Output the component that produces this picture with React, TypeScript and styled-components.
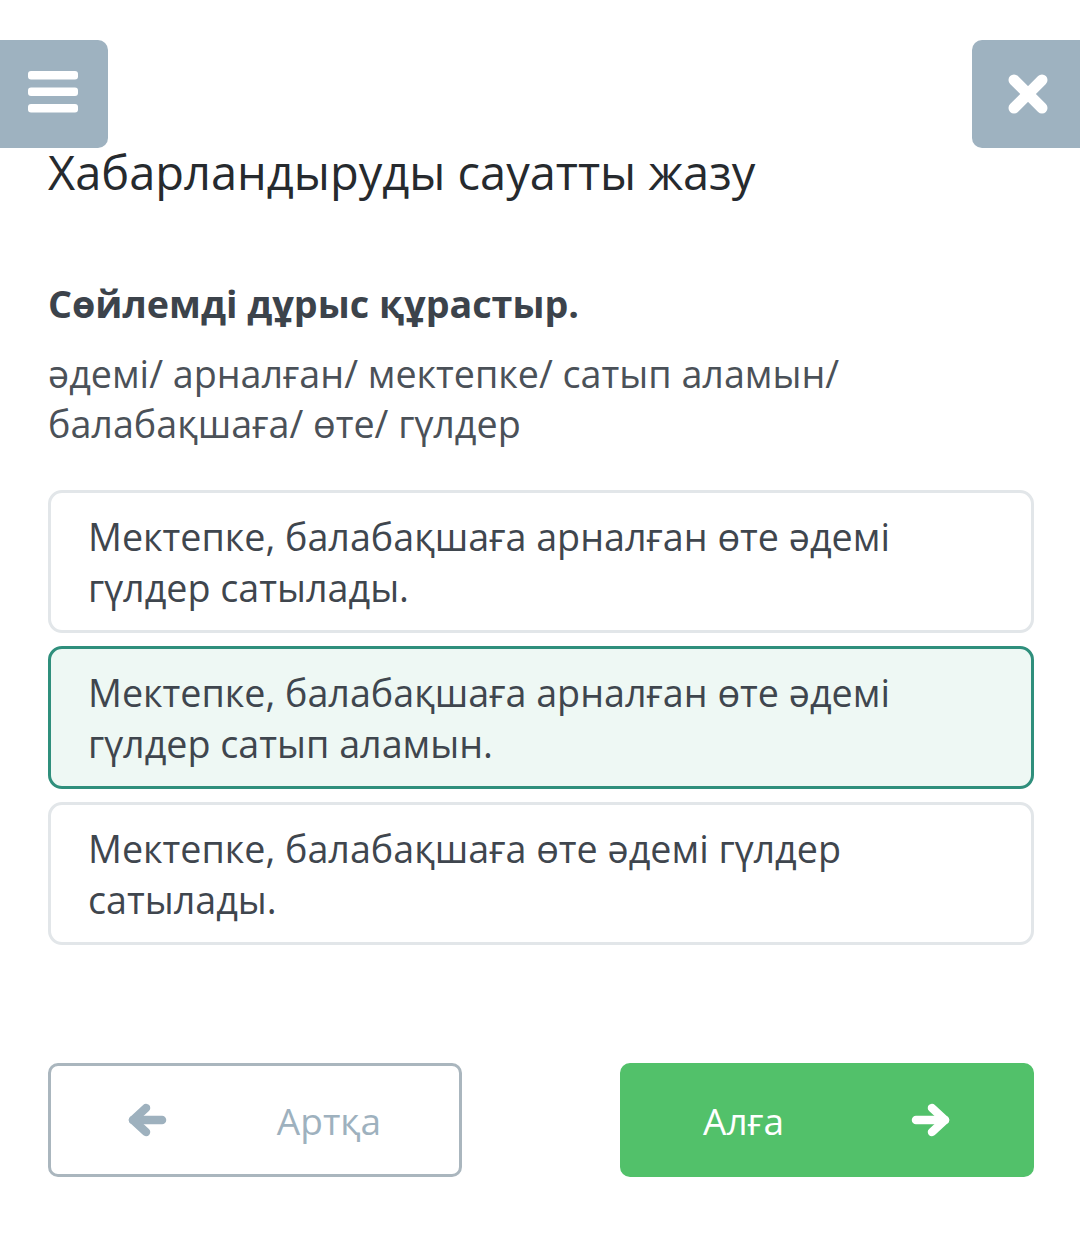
import React from "react";
import styled, { createGlobalStyle } from "styled-components";

const options = [
  { id: "a", text: "Мектепке, балабақшаға арналған өте әдемі гүлдер сатылады.", selected: false },
  { id: "b", text: "Мектепке, балабақшаға арналған өте әдемі гүлдер сатып аламын.", selected: true },
  { id: "c", text: "Мектепке, балабақшаға өте әдемі гүлдер сатылады.", selected: false },
];

const Arrow = ({ dir }: { dir: "left" | "right" }) => (
  <svg width="40" height="34" viewBox="0 0 40 34" fill="none" stroke="currentColor"
    strokeWidth="8.5" strokeLinecap="round" strokeLinejoin="round"
    style={{ transform: dir === "left" ? "scaleX(-1)" : undefined }}>
    <path d="M5 17 H34" />
    <path d="M21 5 L34 17 L21 29" />
  </svg>
);

export default function App() {
  return (
    <>
      <GlobalStyle />
      <Page>
        <TopBar>
          <IconButton $side="left" aria-label="menu">
            <svg width="50" height="42" viewBox="0 0 50 42">
              <rect x="0" y="0" width="50" height="8.5" rx="3" fill="#fff" />
              <rect x="0" y="16.5" width="50" height="8.5" rx="3" fill="#fff" />
              <rect x="0" y="33" width="50" height="8.5" rx="3" fill="#fff" />
            </svg>
          </IconButton>
          <IconButton $side="right" aria-label="close">
            <svg width="42" height="40" viewBox="0 0 42 40" fill="none" stroke="#fff"
              strokeWidth="11" strokeLinecap="round">
              <path d="M7 6 L35 34" />
              <path d="M35 6 L7 34" />
            </svg>
          </IconButton>
        </TopBar>

        <Content>
          <Title>Хабарландыруды сауатты жазу</Title>
          <Question>Сөйлемді дұрыс құрастыр.</Question>
          <Words>
            әдемі/ арналған/ мектепке/ сатып аламын/
            <br />
            балабақшаға/ өте/ гүлдер
          </Words>

          <OptionList>
            {options.map((o) => (
              <Option key={o.id} $selected={o.selected}>
                {o.text}
              </Option>
            ))}
          </OptionList>
        </Content>

        <Footer>
          <NavButton $primary={false}>
            <ArrowSlot>
              <Arrow dir="left" />
            </ArrowSlot>
            <NavLabel>Артқа</NavLabel>
          </NavButton>
          <NavButton $primary>
            <NavLabel>Алға</NavLabel>
            <ArrowSlot>
              <Arrow dir="right" />
            </ArrowSlot>
          </NavButton>
        </Footer>
      </Page>
    </>
  );
}

const GlobalStyle = createGlobalStyle`
  body {
    margin: 0;
    background: #ffffff;
    font-family: "Open Sans", "Noto Sans", sans-serif;
  }
`;

const Page = styled.div`
  width: 1080px;
  height: 1248px;
  display: flex;
  flex-direction: column;
  overflow: hidden;
`;

const TopBar = styled.div`
  display: flex;
  justify-content: space-between;
  padding-top: 40px;
  height: 108px;
`;

const IconButton = styled.button<{ $side: "left" | "right" }>`
  width: 108px;
  height: 108px;
  border: none;
  padding: 0;
  background: #9eb2c0;
  color: #ffffff;
  display: flex;
  align-items: center;
  justify-content: center;
  border-radius: ${({ $side }) => ($side === "left" ? "0 10px 10px 0" : "10px 0 0 10px")};
  cursor: pointer;
  svg {
    display: block;
    margin: ${({ $side }) => ($side === "left" ? "-4px 2px 0 0" : "0 0 0 4px")};
  }
`;

const Content = styled.div`
  padding: 0 46px 0 48px;
  display: flex;
  flex-direction: column;
`;

const Title = styled.h1`
  margin: 0;
  margin-top: -6px;
  font-size: 47px;
  font-weight: 400;
  line-height: 60px;
  color: #262a2e;
`;

const Question = styled.div`
  margin-top: 77px;
  font-size: 37.7px;
  font-weight: 700;
  line-height: 50px;
  color: #3c434b;
`;

const Words = styled.div`
  margin-top: 20px;
  font-size: 37.7px;
  line-height: 50px;
  color: #4b5158;
`;

const OptionList = styled.div`
  margin-top: 41px;
  display: flex;
  flex-direction: column;
  gap: 13px;
`;

const Option = styled.div<{ $selected: boolean }>`
  box-sizing: border-box;
  height: 143px;
  padding: 18px 40px 0 37px;
  border-radius: 14px;
  border: 3px solid ${({ $selected }) => ($selected ? "#2f8f7c" : "#e2e6e9")};
  background: ${({ $selected }) => ($selected ? "#eef8f4" : "#ffffff")};
  font-size: 37.7px;
  line-height: 51px;
  color: #3f464e;
`;

const Footer = styled.div`
  margin-top: auto;
  margin-bottom: 71px;
  padding: 0 46px 0 48px;
  display: flex;
  justify-content: space-between;
`;

const NavButton = styled.button<{ $primary: boolean }>`
  box-sizing: border-box;
  width: 414px;
  height: 114px;
  border-radius: 10px;
  border: 3px solid ${({ $primary }) => ($primary ? "#52c16a" : "#aab6be")};
  background: ${({ $primary }) => ($primary ? "#52c16a" : "#ffffff")};
  color: ${({ $primary }) => ($primary ? "#ffffff" : "#9eb1be")};
  display: flex;
  align-items: center;
  justify-content: space-between;
  padding: ${({ $primary }) => ($primary ? "0 80px 0 80px" : "0 78px 0 76px")};
  font-family: "Open Sans", "Noto Sans", sans-serif;
  cursor: pointer;
`;

const NavLabel = styled.span`
  font-size: 37px;
  line-height: 1;
`;

const ArrowSlot = styled.span`
  display: flex;
  align-items: center;
`;
